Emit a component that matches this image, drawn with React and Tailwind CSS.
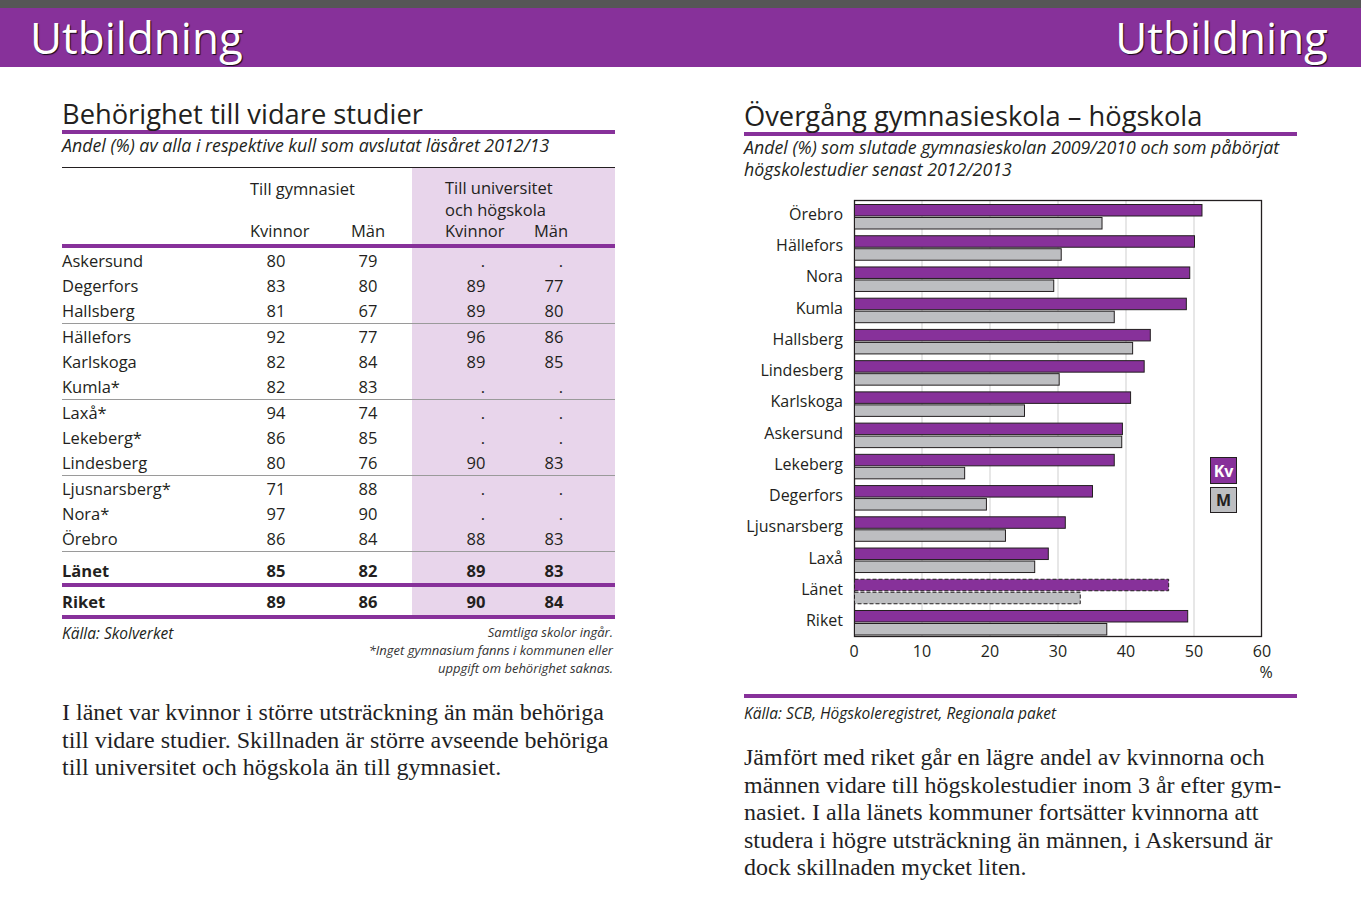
const tableRows = [
  ["Askersund", 80, 79, ".", "."],
  ["Degerfors", 83, 80, 89, 77],
  ["Hallsberg", 81, 67, 89, 80, true],
  ["Hällefors", 92, 77, 96, 86],
  ["Karlskoga", 82, 84, 89, 85],
  ["Kumla*", 82, 83, ".", ".", true],
  ["Laxå*", 94, 74, ".", "."],
  ["Lekeberg*", 86, 85, ".", "."],
  ["Lindesberg", 80, 76, 90, 83, true],
  ["Ljusnarsberg*", 71, 88, ".", "."],
  ["Nora*", 97, 90, ".", "."],
  ["Örebro", 86, 84, 88, 83, true],
];

const bars = [
  ["Örebro", 51.1, 36.4],
  ["Hällefors", 50.0, 30.4],
  ["Nora", 49.3, 29.3],
  ["Kumla", 48.8, 38.2],
  ["Hallsberg", 43.5, 40.9],
  ["Lindesberg", 42.6, 30.1],
  ["Karlskoga", 40.6, 25.0],
  ["Askersund", 39.4, 39.3],
  ["Lekeberg", 38.2, 16.2],
  ["Degerfors", 35.0, 19.4],
  ["Ljusnarsberg", 31.0, 22.2],
  ["Laxå", 28.5, 26.5],
  ["Länet", 46.2, 33.2, true],
  ["Riket", 49.0, 37.1],
];

const PURPLE = "#87319a";
const GRAY = "#bdbec1";
const INK = "#231f20";

function Cell({ value, className = "" }) {
  const dot = value === ".";
  return (
    <div className={`w-[56px] text-center ${dot ? "pl-[14px]" : ""} ${className}`}>{value}</div>
  );
}

function TableRow({ row, bold = false, height = "h-[25px] pt-[2px]", border = "" }) {
  const [name, k1, m1, k2, m2] = row;
  return (
    <div className={`flex ${border} ${bold ? "font-bold" : ""}`}>
      <div className={`flex w-[350px] items-center ${height}`}>
        <div className="w-[186px]">{name}</div>
        <Cell value={k1} />
        <div className="w-[36px]" />
        <Cell value={m1} />
      </div>
      <div className={`flex w-[203px] items-center bg-[#e8d5eb] ${height}`}>
        <div className="w-[36px]" />
        <Cell value={k2} />
        <div className="w-[22px]" />
        <Cell value={m2} />
      </div>
    </div>
  );
}

function BehorighetTable() {
  return (
    <div className="text-[16.5px] text-[#231f20]">
      {/* header */}
      <div className="flex border-t border-[#231f20]">
        <div className="flex h-[76px] w-[350px] flex-col justify-between pt-[9px] pb-[1px]">
          <div className="pl-[188px] leading-[24px]">Till gymnasiet</div>
          <div className="flex pl-[188px] leading-[24px]">
            <span className="w-[101px]">Kvinnor</span>
            <span>Män</span>
          </div>
        </div>
        <div className="flex h-[76px] w-[203px] flex-col bg-[#e8d5eb] pt-[9px] pb-[1px] pl-[33px]">
          <div className="leading-[22px]">Till universitet</div>
          <div className="leading-[21px]">och högskola</div>
          <div className="flex leading-[22px]">
            <span className="w-[89px]">Kvinnor</span>
            <span>Män</span>
          </div>
        </div>
      </div>
      <div className="h-[4px] bg-[#87319a]" />
      {tableRows.map((r) => (
        <TableRow key={r[0]} row={r} border={r[5] ? "border-b border-[#9a9a9a]" : ""} />
      ))}
      <TableRow row={["Länet", 85, 82, 89, 83]} bold height="h-[31px] pt-[7px]" />
      <div className="h-[4px] bg-[#87319a]" />
      <TableRow row={["Riket", 89, 86, 90, 84]} bold height="h-[28px] pt-[3px]" />
      <div className="h-[4px] bg-[#87319a]" />
    </div>
  );
}

function BarChart() {
  const ox = 744;
  const oy = 192;
  const x0 = 854 - ox;
  const unit = 6.8;
  const top = 200 - oy;
  const bottom = 637 - oy;
  const right = 1262 - ox;
  const font = { fontFamily: "'Open Sans', sans-serif" };
  return (
    <svg width="553" height="496" viewBox="0 0 553 496" className="block">
      {[10, 20, 30, 40, 50].map((t) => (
        <line key={t} x1={x0 + t * unit} x2={x0 + t * unit} y1={top} y2={bottom} stroke="#cfcfcf" strokeWidth="1" />
      ))}
      <rect x={x0 + 0.5} y={top + 0.5} width={right - x0 - 1} height={bottom - top - 1} fill="none" stroke="#231f20" strokeWidth="1.3" />
      {bars.map(([name, kv, m, dashed], i) => {
        const y = 204 - oy + i * 31.23;
        const dash = dashed ? "4 2" : undefined;
        return (
          <g key={name}>
            <rect x={x0 + 0.5} y={y + 0.5} width={kv * unit} height={11.5} fill={PURPLE} stroke="#231f20" strokeWidth="1" strokeDasharray={dash} />
            <rect x={x0 + 0.5} y={y + 13.5} width={m * unit} height={11.5} fill={GRAY} stroke="#231f20" strokeWidth="1" strokeDasharray={dash} />
            <text x={843 - ox} y={y + 16} textAnchor="end" fontSize="16" fill={INK} style={font}>
              {name}
            </text>
          </g>
        );
      })}
      {[0, 10, 20, 30, 40, 50, 60].map((t) => (
        <text key={t} x={x0 + t * unit} y={657 - oy} textAnchor="middle" fontSize="16" fill={INK} style={font}>
          {t}
        </text>
      ))}
      <text x={1266 - ox} y={678 - oy} textAnchor="middle" fontSize="16" fill={INK} style={font}>
        %
      </text>
      <rect x={1210.5 - ox} y={457.5 - oy} width="26" height="26" fill={PURPLE} stroke="#231f20" strokeWidth="1" />
      <text x={1223.5 - ox} y={476.5 - oy} textAnchor="middle" fontSize="16" fontWeight="700" fill="#fff" style={font}>
        Kv
      </text>
      <rect x={1210.5 - ox} y={487.5 - oy} width="26" height="25" fill={GRAY} stroke="#231f20" strokeWidth="1" />
      <text x={1223.5 - ox} y={506 - oy} textAnchor="middle" fontSize="16" fontWeight="700" fill={INK} style={font}>
        M
      </text>
    </svg>
  );
}

export default function App() {
  return (
    <div className="h-[908px] w-[1361px] bg-white font-['Open_Sans',sans-serif] text-[#231f20]">
      {/* Header band */}
      <div className="h-[8px] bg-[#565656]" />
      <div className="flex h-[59px] items-center justify-between bg-[#87319a] pr-[33px] pl-[30px] text-[44px] leading-none text-white [text-shadow:1px_1px_1px_rgba(0,0,0,0.85)]">
        <span className="pb-[2px]">Utbildning</span>
        <span className="pb-[2px]">Utbildning</span>
      </div>

      <div className="flex gap-[129px] pl-[62px]">
        {/* Left column */}
        <div className="w-[553px]">
          <h2 className="mt-[31px] text-[27.3px] leading-[32px]">Behörighet till vidare studier</h2>
          <div className="h-[4px] bg-[#87319a]" />
          <p className="text-[17.8px] leading-[23px] italic">Andel (%) av alla i respektive kull som avslutat läsåret 2012/13</p>
          <div className="mt-[10px]">
            <BehorighetTable />
          </div>
          <div className="flex justify-between">
            <p className="mt-[4px] text-[15.5px] leading-[20px] italic">Källa: Skolverket</p>
            <div className="mt-[4px] pr-[2px] text-right text-[13px] leading-[18px] text-[#333] italic">
              <p>Samtliga skolor ingår.</p>
              <p>*Inget gymnasium fanns i kommunen eller</p>
              <p>uppgift om behörighet saknas.</p>
            </div>
          </div>
          <p className="mt-[22px] font-['Liberation_Serif',serif] text-[24px] leading-[27.5px] text-[#1f1f24]">
            I länet var kvinnor i större utsträckning än män behöriga
            <br />
            till vidare studier. Skillnaden är större avseende behöriga
            <br />
            till universitet och högskola än till gymnasiet.
          </p>
        </div>

        {/* Right column */}
        <div className="w-[553px]">
          <h2 className="mt-[33px] text-[27.3px] leading-[32px]">Övergång gymnasieskola – högskola</h2>
          <div className="h-[4px] bg-[#87319a]" />
          <p className="text-[17.8px] leading-[22px] italic">
            Andel (%) som slutade gymnasieskolan 2009/2010 och som påbörjat
            <br />
            högskolestudier senast 2012/2013
          </p>
          <div className="mt-[12px]">
            <BarChart />
          </div>
          <div className="mt-[6px] h-[4px] bg-[#87319a]" />
          <p className="mt-[5px] text-[15.5px] leading-[20px] italic">Källa: SCB, Högskoleregistret, Regionala paket</p>
          <p className="mt-[21px] font-['Liberation_Serif',serif] text-[24px] leading-[27.5px] text-[#1f1f24]">
            Jämfört med riket går en lägre andel av kvinnorna och
            <br />
            männen vidare till högskolestudier inom 3 år efter gym-
            <br />
            nasiet. I alla länets kommuner fortsätter kvinnorna att
            <br />
            studera i högre utsträckning än männen, i Askersund är
            <br />
            dock skillnaden mycket liten.
          </p>
        </div>
      </div>
    </div>
  );
}
